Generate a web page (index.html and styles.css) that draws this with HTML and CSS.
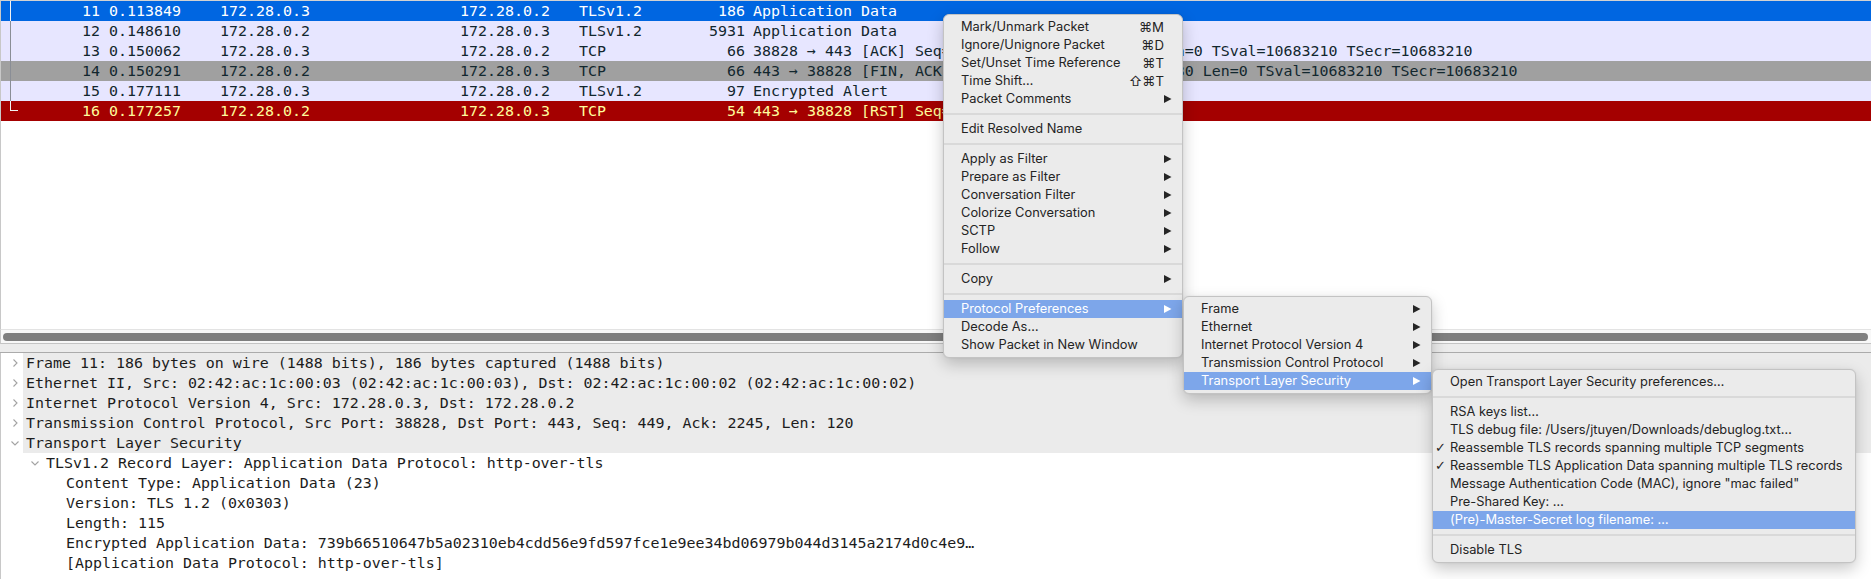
FILE: index.html
```html
<!DOCTYPE html>
<html>
<head>
<meta charset="utf-8">
<link rel="stylesheet" href="styles.css">
</head>
<body>
<div class="app">
  <div class="plist">
    <div class="row sel"><span class="c no"><i class="tree"></i>11</span><span class="c time">0.113849</span><span class="c src">172.28.0.3</span><span class="c dst">172.28.0.2</span><span class="c proto">TLSv1.2</span><span class="c len">186</span><span class="c info">Application Data</span></div>
    <div class="row"><span class="c no"><i class="tree"></i>12</span><span class="c time">0.148610</span><span class="c src">172.28.0.2</span><span class="c dst">172.28.0.3</span><span class="c proto">TLSv1.2</span><span class="c len">5931</span><span class="c info">Application Data</span></div>
    <div class="row"><span class="c no"><i class="tree"></i>13</span><span class="c time">0.150062</span><span class="c src">172.28.0.3</span><span class="c dst">172.28.0.2</span><span class="c proto">TCP</span><span class="c len">66</span><span class="c info">38828 → 443 [ACK] Seq=569 Ack=8176 Win=63872 Len=0 TSval=10683210 TSecr=10683210</span></div>
    <div class="row fin"><span class="c no"><i class="tree"></i>14</span><span class="c time">0.150291</span><span class="c src">172.28.0.2</span><span class="c dst">172.28.0.3</span><span class="c proto">TCP</span><span class="c len">66</span><span class="c info">443 → 38828 [FIN, ACK] Seq=8176 Ack=569 Win=64230 Len=0 TSval=10683210 TSecr=10683210</span></div>
    <div class="row"><span class="c no"><i class="tree"></i>15</span><span class="c time">0.177111</span><span class="c src">172.28.0.3</span><span class="c dst">172.28.0.2</span><span class="c proto">TLSv1.2</span><span class="c len">97</span><span class="c info">Encrypted Alert</span></div>
    <div class="row rst"><span class="c no"><i class="tree end"></i>16</span><span class="c time">0.177257</span><span class="c src">172.28.0.2</span><span class="c dst">172.28.0.3</span><span class="c proto">TCP</span><span class="c len">54</span><span class="c info">443 → 38828 [RST] Seq=8177 Win=0 Len=0</span></div>
  </div>
  <div class="hscroll"><div class="thumb"></div></div>
  <div class="splitter"></div>
  <div class="details">
    <div class="drow hi"><span class="tog"><svg width="8" height="8" viewBox="0 0 8 8"><path d="M2.5 0.5 L6 4 L2.5 7.5" /></svg></span><span class="lab">Frame 11: 186 bytes on wire (1488 bits), 186 bytes captured (1488 bits)</span></div>
    <div class="drow hi"><span class="tog"><svg width="8" height="8" viewBox="0 0 8 8"><path d="M2.5 0.5 L6 4 L2.5 7.5" /></svg></span><span class="lab">Ethernet II, Src: 02:42:ac:1c:00:03 (02:42:ac:1c:00:03), Dst: 02:42:ac:1c:00:02 (02:42:ac:1c:00:02)</span></div>
    <div class="drow hi"><span class="tog"><svg width="8" height="8" viewBox="0 0 8 8"><path d="M2.5 0.5 L6 4 L2.5 7.5" /></svg></span><span class="lab">Internet Protocol Version 4, Src: 172.28.0.3, Dst: 172.28.0.2</span></div>
    <div class="drow hi"><span class="tog"><svg width="8" height="8" viewBox="0 0 8 8"><path d="M2.5 0.5 L6 4 L2.5 7.5" /></svg></span><span class="lab">Transmission Control Protocol, Src Port: 38828, Dst Port: 443, Seq: 449, Ack: 2245, Len: 120</span></div>
    <div class="drow hi"><span class="tog"><svg width="8" height="8" viewBox="0 0 8 8"><path d="M0.5 2.5 L4 6 L7.5 2.5" /></svg></span><span class="lab">Transport Layer Security</span></div>
    <div class="drow l1"><span class="tog"><svg width="8" height="8" viewBox="0 0 8 8"><path d="M0.5 2.5 L4 6 L7.5 2.5" /></svg></span><span class="lab">TLSv1.2 Record Layer: Application Data Protocol: http-over-tls</span></div>
    <div class="drow l2"><span class="tog"></span><span class="lab">Content Type: Application Data (23)</span></div>
    <div class="drow l2"><span class="tog"></span><span class="lab">Version: TLS 1.2 (0x0303)</span></div>
    <div class="drow l2"><span class="tog"></span><span class="lab">Length: 115</span></div>
    <div class="drow l2"><span class="tog"></span><span class="lab">Encrypted Application Data: 739b66510647b5a02310eb4cdd56e9fd597fce1e9ee34bd06979b044d3145a2174d0c4e9…</span></div>
    <div class="drow l2"><span class="tog"></span><span class="lab">[Application Data Protocol: http-over-tls]</span></div>
  </div>

  <div class="menu main">
    <div class="mi"><span class="t">Mark/Unmark Packet</span><span class="k">⌘M</span></div>
    <div class="mi"><span class="t">Ignore/Unignore Packet</span><span class="k">⌘D</span></div>
    <div class="mi"><span class="t">Set/Unset Time Reference</span><span class="k">⌘T</span></div>
    <div class="mi"><span class="t">Time Shift…</span><span class="k">⇧⌘T</span></div>
    <div class="mi"><span class="t">Packet Comments</span><svg class="arr" width="8" height="8" viewBox="0 0 8 8"><path d="M0 0 L7.5 4 L0 8 Z"/></svg></div>
    <div class="sep"></div>
    <div class="mi"><span class="t">Edit Resolved Name</span></div>
    <div class="sep"></div>
    <div class="mi"><span class="t">Apply as Filter</span><svg class="arr" width="8" height="8" viewBox="0 0 8 8"><path d="M0 0 L7.5 4 L0 8 Z"/></svg></div>
    <div class="mi"><span class="t">Prepare as Filter</span><svg class="arr" width="8" height="8" viewBox="0 0 8 8"><path d="M0 0 L7.5 4 L0 8 Z"/></svg></div>
    <div class="mi"><span class="t">Conversation Filter</span><svg class="arr" width="8" height="8" viewBox="0 0 8 8"><path d="M0 0 L7.5 4 L0 8 Z"/></svg></div>
    <div class="mi"><span class="t">Colorize Conversation</span><svg class="arr" width="8" height="8" viewBox="0 0 8 8"><path d="M0 0 L7.5 4 L0 8 Z"/></svg></div>
    <div class="mi"><span class="t">SCTP</span><svg class="arr" width="8" height="8" viewBox="0 0 8 8"><path d="M0 0 L7.5 4 L0 8 Z"/></svg></div>
    <div class="mi"><span class="t">Follow</span><svg class="arr" width="8" height="8" viewBox="0 0 8 8"><path d="M0 0 L7.5 4 L0 8 Z"/></svg></div>
    <div class="sep"></div>
    <div class="mi"><span class="t">Copy</span><svg class="arr" width="8" height="8" viewBox="0 0 8 8"><path d="M0 0 L7.5 4 L0 8 Z"/></svg></div>
    <div class="sep"></div>
    <div class="mi hl"><span class="t">Protocol Preferences</span><svg class="arr" width="8" height="8" viewBox="0 0 8 8"><path d="M0 0 L7.5 4 L0 8 Z"/></svg></div>
    <div class="mi"><span class="t">Decode As…</span></div>
    <div class="mi"><span class="t">Show Packet in New Window</span></div>
  </div>

  <div class="menu sub1">
    <div class="mi"><span class="t">Frame</span><svg class="arr" width="8" height="8" viewBox="0 0 8 8"><path d="M0 0 L7.5 4 L0 8 Z"/></svg></div>
    <div class="mi"><span class="t">Ethernet</span><svg class="arr" width="8" height="8" viewBox="0 0 8 8"><path d="M0 0 L7.5 4 L0 8 Z"/></svg></div>
    <div class="mi"><span class="t">Internet Protocol Version 4</span><svg class="arr" width="8" height="8" viewBox="0 0 8 8"><path d="M0 0 L7.5 4 L0 8 Z"/></svg></div>
    <div class="mi"><span class="t">Transmission Control Protocol</span><svg class="arr" width="8" height="8" viewBox="0 0 8 8"><path d="M0 0 L7.5 4 L0 8 Z"/></svg></div>
    <div class="mi hl"><span class="t">Transport Layer Security</span><svg class="arr" width="8" height="8" viewBox="0 0 8 8"><path d="M0 0 L7.5 4 L0 8 Z"/></svg></div>
  </div>

  <div class="menu sub2">
    <div class="mi"><span class="t">Open Transport Layer Security preferences…</span></div>
    <div class="sep"></div>
    <div class="mi"><span class="t">RSA keys list…</span></div>
    <div class="mi"><span class="t">TLS debug file: /Users/jtuyen/Downloads/debuglog.txt…</span></div>
    <div class="mi"><span class="ck">✓</span><span class="t">Reassemble TLS records spanning multiple TCP segments</span></div>
    <div class="mi"><span class="ck">✓</span><span class="t">Reassemble TLS Application Data spanning multiple TLS records</span></div>
    <div class="mi"><span class="t">Message Authentication Code (MAC), ignore "mac failed"</span></div>
    <div class="mi"><span class="t">Pre-Shared Key: …</span></div>
    <div class="mi hl"><span class="t">(Pre)-Master-Secret log filename: …</span></div>
    <div class="sep"></div>
    <div class="mi"><span class="t">Disable TLS</span></div>
  </div>
</div>
</body>
</html>
```

FILE: styles.css
```css
html, body {
  margin: 0;
  padding: 0;
  background: #ffffff;
}

.app {
  position: relative;
  width: 1871px;
  height: 579px;
  overflow: hidden;
  font-family: "DejaVu Sans Mono", "Liberation Mono", monospace;
}

/* ---------- packet list ---------- */
.plist {
  height: 328px;
  border-top: 1px solid #d2d2d2;
  border-left: 1px solid #c8c8c8;
  background: #ffffff;
}

.row {
  display: flex;
  height: 20px;
  line-height: 20px;
  font-size: 14.95px;
  white-space: nowrap;
  color: #12272e;
  background: #e7e6ff;
}

.row.sel { background: #0066e1; color: #ffffff; }
.row.fin { background: #a0a0a0; }
.row.rst { background: #a40000; color: #fffc9c; }

.c { display: block; overflow: hidden; flex: none; }

.no {
  width: 99px;
  padding-right: 9px;
  display: flex;
  justify-content: space-between;
  align-items: flex-start;
}

.tree {
  display: block;
  margin-left: 9px;
  width: 1px;
  height: 20px;
  background: #8a8e96;
}
.row.sel .tree, .row.rst .tree { background: #f2f2f2; }

.row .tree.end {
  width: 8px;
  height: 10px;
  background: none;
  border-left: 1px solid #f2f2f2;
  border-bottom: 1px solid #f2f2f2;
  box-sizing: border-box;
}

.time { width: 111px; }
.src { width: 240px; }
.dst { width: 119px; }
.proto { width: 121px; }
.len { width: 45px; padding-right: 8px; text-align: right; }
.info { flex: 1; }

/* ---------- horizontal scrollbar + splitter ---------- */
.hscroll {
  box-sizing: border-box;
  height: 15px;
  border-top: 1px solid #e3e3e3;
  border-bottom: 1px solid #c4c4c4;
  border-left: 1px solid #c8c8c8;
  background: #f8f8f8;
  padding: 3px 3px 0 2px;
}

.thumb {
  height: 8px;
  border-radius: 4px;
  background: #7f7f7f;
}

.splitter {
  height: 8px;
  background: #ececec;
  border-bottom: 1px solid #ababab;
}

/* ---------- details tree ---------- */
.details {
  border-left: 1px solid #c8c8c8;
  height: 227px;
}

.drow {
  display: flex;
  height: 20px;
  line-height: 20px;
  font-size: 14.95px;
  white-space: nowrap;
  color: #1c1c1c;
}

.tog {
  width: 22px;
  flex: none;
  display: flex;
  align-items: center;
}

.tog svg {
  margin-left: 10px;
  fill: none;
  stroke: #a3a3a3;
  stroke-width: 1.1;
}

.lab {
  flex: 1;
  padding-left: 3px;
}

.drow.hi .lab { background: #ebebeb; }
.drow.l1 { padding-left: 20px; }
.drow.l2 { padding-left: 40px; }

/* ---------- context menus ---------- */
.menu {
  position: absolute;
  box-sizing: border-box;
  background: #ebebeb;
  border: 1px solid #c3c3c3;
  border-radius: 6px;
  box-shadow: 0 6px 16px rgba(0, 0, 0, 0.22), 0 0 2px rgba(0, 0, 0, 0.08);
  padding: 3px 0;
  font-family: Inter, "Noto Sans", "Liberation Sans", sans-serif;
  font-size: 12.85px;
  color: #242424;
}

.main { left: 943px; top: 14px; width: 240px; }
.sub1 { left: 1183px; top: 296px; width: 249px; }
.sub2 { left: 1432px; top: 369px; width: 424px; }

.mi {
  display: flex;
  align-items: center;
  height: 18px;
  line-height: 18px;
  padding: 0 10px 0 17px;
  white-space: nowrap;
}

.mi .t { flex: 1; }

.mi .k {
  margin-right: 8px;
  font-family: Inter, "DejaVu Sans", sans-serif;
  font-size: 13.2px;
}

.mi .arr { fill: #262626; flex: none; }

.mi.hl { background: #7da6ea; color: #ffffff; }
.mi.hl .arr { fill: #ffffff; }

.mi .ck {
  width: 15px;
  margin-left: -15px;
  font-family: "DejaVu Sans", sans-serif;
  font-size: 13px;
}

.sep {
  height: 12px;
  display: flex;
  align-items: center;
}

.sep::before {
  content: "";
  flex: 1;
  height: 2px;
  background: #d9d9d9;
}
```
